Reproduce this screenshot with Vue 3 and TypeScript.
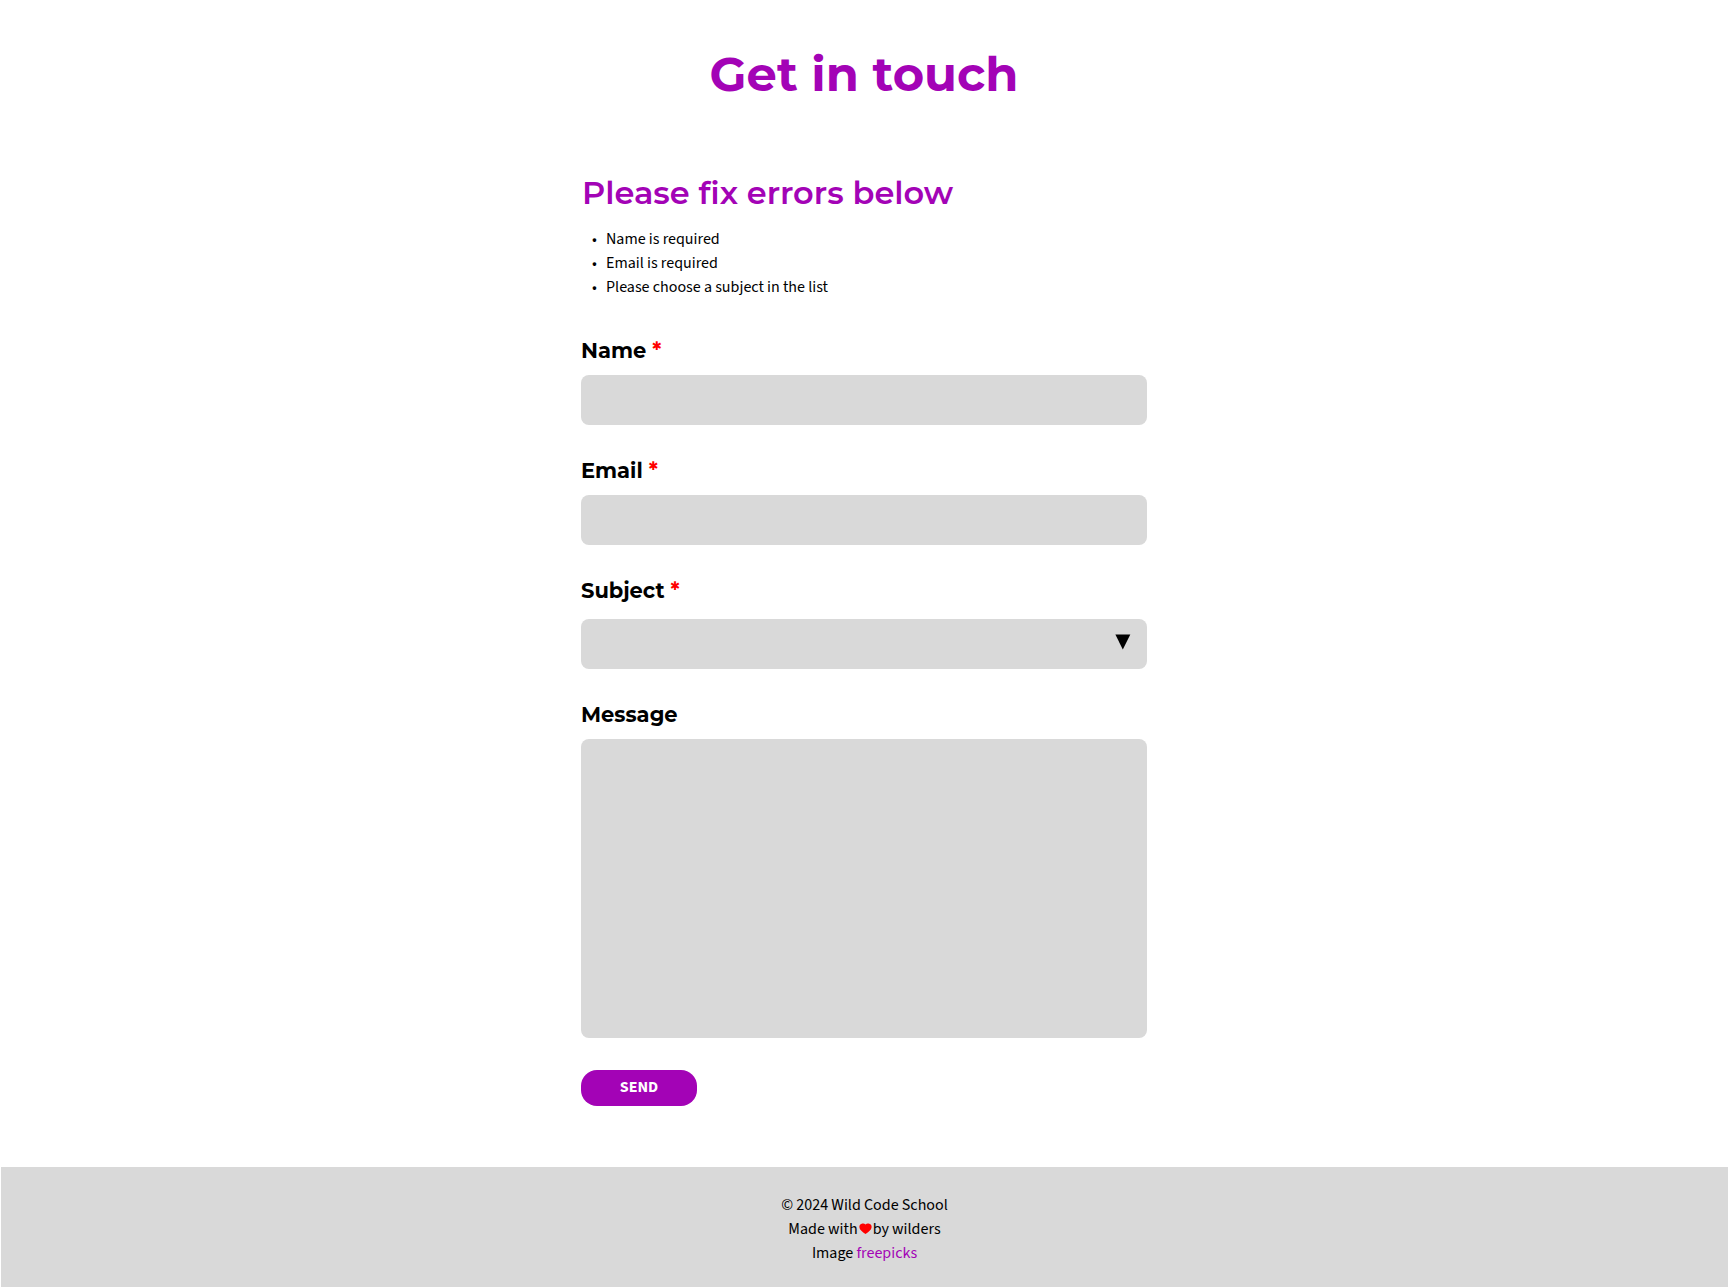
<script setup lang="ts">
import { reactive, ref } from 'vue'

interface ContactForm {
  name: string
  email: string
  subject: string
  message: string
}

const form = reactive<ContactForm>({ name: '', email: '', subject: '', message: '' })

const errors = ref<string[]>([
  'Name is required',
  'Email is required',
  'Please choose a subject in the list',
])

function validate(): void {
  const found: string[] = []
  if (!form.name) found.push('Name is required')
  if (!form.email) found.push('Email is required')
  if (!form.subject) found.push('Please choose a subject in the list')
  errors.value = found
}
</script>

<template>
  <div class="page">
    <main class="content">
      <h1 class="title">Get in touch</h1>

      <section v-if="errors.length" class="errors">
        <h2 class="errors-title">Please fix errors below</h2>
        <ul class="errors-list">
          <li v-for="error in errors" :key="error">{{ error }}</li>
        </ul>
      </section>

      <form class="form" novalidate @submit.prevent="validate">
        <div class="field">
          <label class="label" for="name">Name <span class="required">*</span></label>
          <input id="name" v-model="form.name" class="control" type="text" />
        </div>
        <div class="field">
          <label class="label" for="email">Email <span class="required">*</span></label>
          <input id="email" v-model="form.email" class="control" type="email" />
        </div>
        <div class="field field-select">
          <label class="label" for="subject">Subject <span class="required">*</span></label>
          <div class="select-wrap">
            <select id="subject" v-model="form.subject" class="control">
              <option value=""></option>
            </select>
            <svg class="arrow" width="16" height="16" viewBox="0 0 16 16" aria-hidden="true">
              <path d="M0.4 0.6H15.3L7.8 15.6Z" fill="#000" />
            </svg>
          </div>
        </div>
        <div class="field">
          <label class="label" for="message">Message</label>
          <textarea id="message" v-model="form.message" class="control message"></textarea>
        </div>
        <button class="send" type="submit">SEND</button>
      </form>
    </main>

    <footer class="footer">
      <p>© 2024 Wild Code School</p>
      <p class="made">
        <span>Made with</span>
        <svg class="heart" width="13" height="12" viewBox="0 0 13 12" role="img" aria-label="love">
          <path
            d="M6.500 1.500C5.500.3 4 .3 2.700.7C1 1.200.3 2.600.4 4.200C.6 7 3.400 8.800 6.500 11C9.600 8.800 12.400 7 12.600 4.200C12.700 2.600 12 1.200 10.300.7C9 .3 7.500.3 6.500 1.500Z"
            fill="#f00"
          />
        </svg>
        <span>by wilders</span>
      </p>
      <p>Image <a class="link" href="#">freepicks</a></p>
    </footer>
  </div>
</template>

<style>
body {
  margin: 0;
  background: #fff;
}
</style>

<style scoped>
.page {
  display: flex;
  flex-direction: column;
  min-height: 100vh;
  color: #000;
  font-family: 'Source Sans 3', 'Source Sans Pro', 'Noto Sans CJK SC', sans-serif;
  font-size: 16px;
  line-height: 24px;
}

.content {
  flex: 1;
  width: calc(100% - 32px);
  max-width: 566px;
  margin: 0 auto;
  padding: 44px 0 61px;
}

.title,
.errors-title,
.label {
  font-family: Montserrat, Inter, sans-serif;
}

.title {
  margin: 0 0 69px;
  color: #a303b6;
  font-size: 48px;
  font-weight: 700;
  line-height: 60px;
  text-align: center;
}

.errors-title {
  margin: 0 0 14px 1px;
  color: #a303b6;
  font-size: 32px;
  font-weight: 600;
  line-height: 40px;
}

.errors-list {
  margin: 0 0 40px;
  padding-left: 11px;
  list-style: none;
}

.errors-list li {
  display: flex;
}

.errors-list li::before {
  content: '•';
  flex: 0 0 14px;
}

.form {
  display: flex;
  flex-direction: column;
  gap: 34px;
}

.field {
  display: flex;
  flex-direction: column;
  gap: 12px;
}

.field-select {
  gap: 16px;
}

.label {
  font-size: 21px;
  font-weight: 700;
  line-height: 24px;
}

.required {
  color: #f00;
}

.control {
  box-sizing: border-box;
  width: 100%;
  height: 50px;
  margin: 0;
  padding: 0 16px;
  border: 0;
  border-radius: 8px;
  background: #d9d9d9;
  font: inherit;
  color: inherit;
  appearance: none;
}

.message {
  height: 299px;
  padding: 16px;
  resize: none;
}

.select-wrap {
  display: grid;
  align-items: center;
}

.select-wrap > * {
  grid-area: 1 / 1;
}

.arrow {
  justify-self: end;
  margin: 0 16px 4px 0;
  pointer-events: none;
}

.send {
  align-self: flex-start;
  width: 116px;
  height: 36px;
  margin-top: -2px;
  padding: 0 0 2px;
  border: 0;
  border-radius: 16px;
  background: #a303b6;
  color: #fff;
  font: inherit;
  font-weight: 700;
  cursor: pointer;
}

.footer {
  padding: 26px 0 22px;
  border-left: 1px solid #fff;
  background: #d9d9d9;
  text-align: center;
}

.footer p {
  margin: 0;
}

.made {
  display: flex;
  justify-content: center;
  align-items: center;
  gap: 1px;
}

.link {
  color: #a303b6;
  text-decoration: none;
}
</style>
